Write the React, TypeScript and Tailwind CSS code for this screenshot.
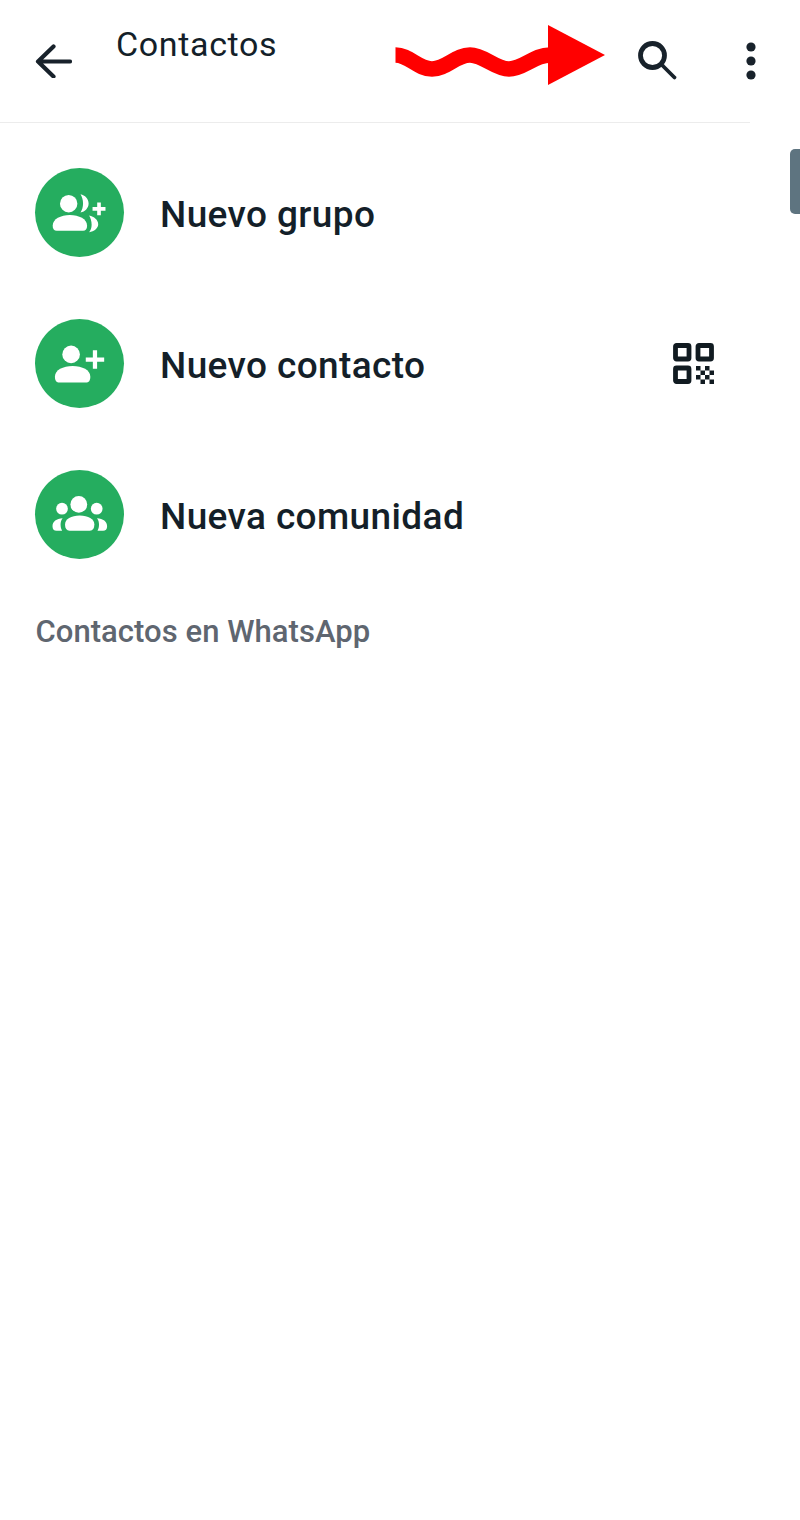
import React from 'react';

const fontRoboto = "font-['Roboto',sans-serif]";

const GroupIcon = () => (
  <svg viewBox="0 0 88 88" className="w-full h-full" fill="#fff">
    <circle cx="33.3" cy="35.3" r="8.6" />
    <path d="M17.5 57c0-6.5 8-10.500 17-10.500s17 4 17 10.500c0 3.500-1.500 5-4 5h-26c-2.500 0-4-1.500-4-5z" />
    <path d="M45 26c4.500 1 8 4.500 8 9s-3.500 8-8 9c1.500-2.500 2.500-5.500 2.500-9s-1-6.500-2.500-9z" />
    <path d="M53.500 47c5 1 9 4.500 9 8.500s-4 7-9 8c1.500-2 2.500-4.500 2.500-7.500s-1-6.500-2.500-9z" />
    <path d="M61.500 34h3.600v4.600h4.600v3.600h-4.600v4.600h-3.600v-4.600h-4.600v-3.600h4.600z" />
  </svg>
);

const ContactIcon = () => (
  <svg viewBox="0 0 88 88" className="w-full h-full" fill="#fff">
    <circle cx="35.700" cy="35" r="8.700" />
    <path d="M19.700 57c0-6.500 8-10.500 17.500-10.500s17.500 4 17.500 10.500c0 4-1.500 5.700-4.500 5.700h-26c-3 0-4.500-1.700-4.500-5.700z" />
    <path d="M57.200 31h4.200v7h7v4.200h-7v7h-4.200v-7h-7v-4.200h7z" />
  </svg>
);

const CommunityIcon = () => (
  <svg viewBox="0 0 88 88" className="w-full h-full" fill="#fff">
    <circle cx="43.300" cy="34" r="8.300" />
    <circle cx="26.700" cy="38.300" r="5.800" />
    <circle cx="61" cy="38.300" r="5.800" />
    <path d="M29.700 54c0-5.500 6-9 14.500-9s14.500 3.500 14.500 9c0 4-1.500 6-4.500 6h-20c-3 0-4.500-2-4.500-6z" />
    <path d="M27.300 47.700c-1.500 2-2 4-2 6.300 0 2.500.5 4.500 1.500 6h-5.500c-2.500 0-4-1.500-4-4.500 0-4.500 4-7.500 10-7.800z" />
    <path d="M61.300 47.700c1.500 2 2 4 2 6.300 0 2.500-.5 4.500-1.500 6h5.500c2.500 0 4-1.500 4-4.500 0-4.500-4-7.500-10-7.800z" />
  </svg>
);

const QrIcon = () => (
  <svg viewBox="0 0 42 42" className="w-[42px] h-[42px]" fill="none" stroke="#111b21" strokeWidth="4.800">
    <rect x="3.500" y="3.500" width="13.500" height="13.500" rx="1" />
    <rect x="26" y="3.500" width="13.500" height="13.500" rx="1" />
    <rect x="3.500" y="26" width="13.500" height="13.500" rx="1" />
    <path
      stroke="none"
      fill="#111b21"
      d="M24 24h4.500v4.500H24zM33 24h4.500v4.500H33zM28.500 28.500H33V33h-4.500zM37.500 28.500H42V33h-4.500zM24 33h4.500v4.500H24zM33 33h4.500v4.500H33zM28.500 37.500H33V42h-4.500zM37.500 37.500H42V42h-4.500z"
    />
  </svg>
);

const rows = [
  { label: 'Nuevo grupo', icon: <GroupIcon /> },
  { label: 'Nuevo contacto', icon: <ContactIcon />, qr: true },
  { label: 'Nueva comunidad', icon: <CommunityIcon /> },
];

export default function App() {
  return (
    <div className={`relative w-[800px] h-[1520px] overflow-hidden bg-white text-[#141f29] ${fontRoboto}`}>
      <header className="flex h-[123px] w-[750px] items-start border-b border-[#ececec] pl-[35px]">
        <svg viewBox="0 0 36 34" className="mt-[44px] w-[37px] h-[34px]" fill="none" stroke="#18222b" strokeWidth="4.200" strokeLinecap="round" strokeLinejoin="round">
          <path d="M34.500 17.500H2.500M18 2.500 2.500 17.500 18 32.500" />
        </svg>
        <h1 className="ml-[44px] mt-[24px] text-[34px] leading-[40px] tracking-[0.65px] font-normal">Contactos</h1>
        <div className="ml-auto flex">
          <svg viewBox="0 0 40 40" className="mt-[41px] w-[40px] h-[40px]" fill="none" stroke="#18222b" strokeLinecap="round">
            <circle cx="14.500" cy="14.500" r="12" strokeWidth="4.800" />
            <path d="M24.500 24.500 36.500 36.500" strokeWidth="3.800" />
          </svg>
        </div>
        <svg viewBox="0 0 12 38" className="ml-[67px] -mr-[7px] mt-[42px] w-[12px] h-[38px]" fill="#18222b">
          <circle cx="6" cy="5" r="4.600" />
          <circle cx="6" cy="19" r="4.600" />
          <circle cx="6" cy="33" r="4.600" />
        </svg>
      </header>

      <main className="pt-[13.500px]">
        {rows.map((row) => (
          <div key={row.label} className="flex h-[151px] items-center pl-[35px] pr-[86px]">
            <div className="w-[89px] h-[89px] shrink-0 rounded-full bg-[#25ad5f]">{row.icon}</div>
            <span className="ml-[36px] mt-[5px] text-[37px] leading-[44px] tracking-[0.38px] font-medium">{row.label}</span>
            {row.qr && <div className="ml-auto"><QrIcon /></div>}
          </div>
        ))}
        <p className="mt-[22px] pl-[35.500px] text-[31px] leading-[40px] tracking-[0.05px] font-medium text-[#5f6670]">Contactos en WhatsApp</p>
      </main>

      {/* red annotation arrow over the toolbar */}
      <svg viewBox="0 0 220 70" className="absolute left-[390px] top-[20px] w-[220px] h-[70px]">
        <path d="M5.500 35C19 35 28 49 42 49S66 35 80 35s25 14 39 14 25-14 41-14" fill="none" stroke="#ff0000" strokeWidth="15.500" />
        <path d="M158 5 215 35 158 65z" fill="#ff0000" />
      </svg>

      <div className="absolute right-0 top-[149px] h-[65px] w-[10px] rounded-l-[5px] bg-[#5e7480]" />
    </div>
  );
}
